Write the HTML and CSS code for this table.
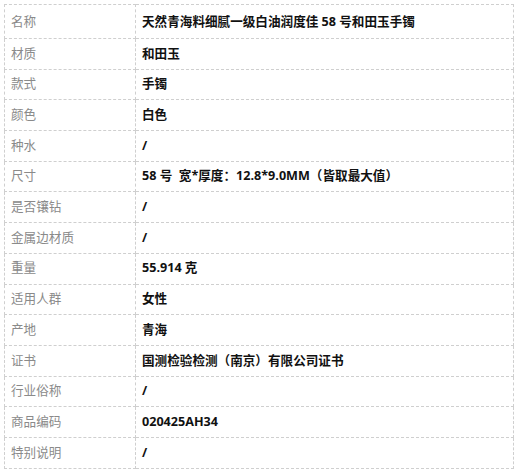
FILE: index.html
```html
<!DOCTYPE html>
<html lang="zh">
<head>
<meta charset="utf-8">
<link rel="stylesheet" href="styles.css">
</head>
<body>
<table class="spec">
<tbody>
<tr><td class="k">名称</td><td class="v">天然青海料细腻一级白油润度佳 58 号和田玉手镯</td></tr>
<tr><td class="k">材质</td><td class="v">和田玉</td></tr>
<tr><td class="k">款式</td><td class="v">手镯</td></tr>
<tr><td class="k">颜色</td><td class="v">白色</td></tr>
<tr><td class="k">种水</td><td class="v">/</td></tr>
<tr><td class="k">尺寸</td><td class="v">58 号&nbsp; 宽*厚度：12.8*9.0MM（皆取最大值）</td></tr>
<tr><td class="k">是否镶钻</td><td class="v">/</td></tr>
<tr><td class="k">金属边材质</td><td class="v">/</td></tr>
<tr><td class="k">重量</td><td class="v">55.914 克</td></tr>
<tr><td class="k">适用人群</td><td class="v">女性</td></tr>
<tr><td class="k">产地</td><td class="v">青海</td></tr>
<tr><td class="k">证书</td><td class="v">国测检验检测（南京）有限公司证书</td></tr>
<tr><td class="k">行业俗称</td><td class="v">/</td></tr>
<tr><td class="k">商品编码</td><td class="v">020425AH34</td></tr>
<tr><td class="k">特别说明</td><td class="v">/</td></tr>
</tbody>
</table>
</body>
</html>
```
FILE: styles.css
```css
html, body {
  margin: 0;
  padding: 0;
  background: #fff;
}
body {
  padding: 4px 0 0 4px;
  font-family: "Open Sans", "Noto Sans CJK SC", sans-serif;
  font-size: 12.6px;
}
.spec {
  border-collapse: collapse;
  width: 510px;
}
.spec td {
  border: 1px dashed #cfcfcf;
  height: 29.7px;
  padding: 0;
  vertical-align: middle;
  line-height: 1.3;
}
.spec tr:first-child td {
  height: 31px;
  padding-top: 2px;
}
.k {
  width: 124px;
  padding-left: 6px !important;
  color: #8a8a8a;
  font-weight: 400;
}
.v {
  padding-left: 6px !important;
  color: #111;
  font-weight: 700;
}
```
